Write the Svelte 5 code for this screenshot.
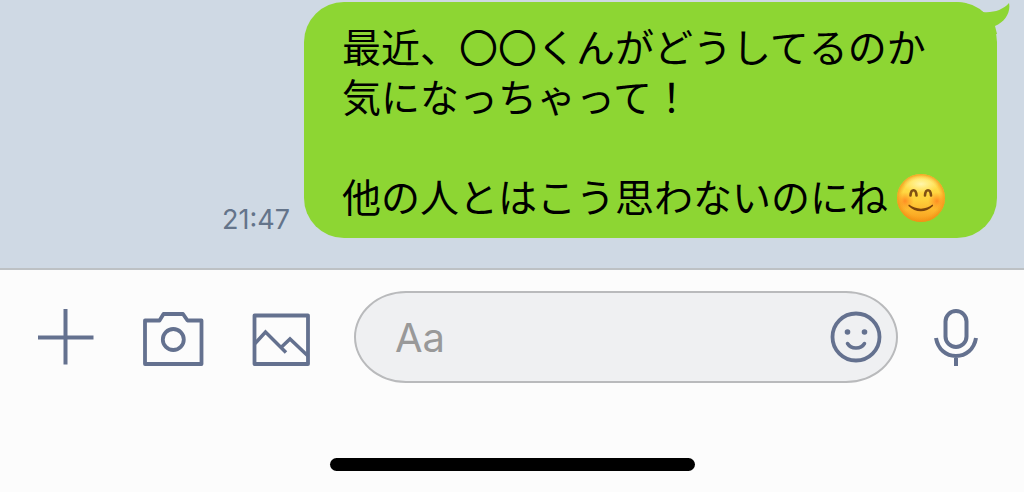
<script lang="ts">
	let draft = '';
	const message = '最近、〇〇くんがどうしてるのか\n気になっちゃって！\n\n他の人とはこう思わないのにね';
</script>

<div class="screen">
	<main class="chat">
		<time datetime="21:47">21:47</time>
		<div class="bubble">
			<svg class="tail" viewBox="0 0 56 34" aria-hidden="true">
				<path d="M0 2C13 2 21 7 29 12C39 13 49 10 55 3C57 12 51 22 41 26L43 34H0Z" />
			</svg>
			<p>{message}<svg class="emoji" viewBox="0 0 48 48" role="img" aria-label="😊">
					<defs>
						<linearGradient id="face" x1="0" y1="0" x2="0" y2="1">
							<stop offset="0" stop-color="#ffe955" />
							<stop offset="0.55" stop-color="#ffd03a" />
							<stop offset="1" stop-color="#f99a1c" />
						</linearGradient>
						<radialGradient id="shade">
							<stop offset="0.78" stop-color="#f39a18" stop-opacity="0" />
							<stop offset="1" stop-color="#ef8b12" stop-opacity="0.75" />
						</radialGradient>
						<radialGradient id="cheek">
							<stop offset="0" stop-color="#ff6a18" stop-opacity="0.65" />
							<stop offset="1" stop-color="#ff7a18" stop-opacity="0" />
						</radialGradient>
						<radialGradient id="shine">
							<stop offset="0" stop-color="#fff9b8" stop-opacity="0.9" />
							<stop offset="1" stop-color="#fff6a0" stop-opacity="0" />
						</radialGradient>
					</defs>
					<circle cx="24" cy="24" r="24" fill="url(#face)" />
					<circle cx="24" cy="24" r="24" fill="url(#shade)" />
					<ellipse cx="24" cy="10" rx="18" ry="9" fill="url(#shine)" />
					<circle cx="8" cy="27" r="9" fill="url(#cheek)" />
					<circle cx="40" cy="27" r="9" fill="url(#cheek)" />
					<g fill="none" stroke="#805013" stroke-linecap="round">
						<path stroke-width="2.6" d="M13.5 21.5C14 14.5 19 14.5 19.5 21.5M28 21.5C28.5 14.5 33.5 14.5 34 21.5" />
					</g>
					<path fill="#7b440b" d="M12 30.5C19 36 29 36 35.5 30.5Q36.5 31 36 32C29 39 18.500 39 11.500 32Q11 31 12 30.500Z" />
				</svg></p>
		</div>
	</main>

	<footer>
		<form class="composer" on:submit|preventDefault>
			<div class="tools">
				<button type="button" aria-label="追加">
					<svg width="56" height="56" viewBox="0 0 56 56">
						<path stroke-width="4" d="M0 28.500H55.500M27.500 0V55.500" />
					</svg>
				</button>
				<button type="button" aria-label="カメラ">
					<svg width="62" height="58" viewBox="0 0 62 58">
						<path stroke-width="3.800" stroke-linejoin="round" d="M3 12.500H17.500L21.500 6H41L45.500 12.500H59.500V56H3Z" />
						<circle cx="31.300" cy="31.500" r="10.500" stroke-width="3.800" />
					</svg>
				</button>
				<button type="button" aria-label="写真">
					<svg width="58" height="58" viewBox="0 0 58 58">
						<path stroke-width="3.800" stroke-linejoin="round" d="M2.500 7.500H56V56H2.500Z" />
						<path stroke-width="3.500" d="M3 35.500L13.500 24L34 44.500M28.500 40L38 31L56 48" />
					</svg>
				</button>
			</div>
			<div class="field">
				<input type="text" placeholder="Aa" aria-label="メッセージ" bind:value={draft} />
				<button type="button" aria-label="スタンプ">
					<svg width="52" height="52" viewBox="0 0 52 52">
						<circle cx="26" cy="26" r="23.500" stroke-width="3.800" />
						<circle class="dot" cx="17.500" cy="21" r="2.800" />
						<circle class="dot" cx="34.500" cy="21" r="2.800" />
						<path stroke-width="3.500" stroke-linecap="round" d="M17.500 32.500C21 38.500 31 38.500 34.500 32.500" />
					</svg>
				</button>
			</div>
			<button type="button" aria-label="音声">
				<svg width="44" height="58" viewBox="0 0 44 58">
					<rect x="11.500" y="3" width="21" height="36" rx="10.500" stroke-width="4" />
					<path stroke-width="4" d="M2 30C4 41.500 12 48 22 48S40 41.500 42 30M22 48V58" />
				</svg>
			</button>
		</form>
		<div class="home-bar"></div>
	</footer>
</div>

<style>
	:global(body) {
		margin: 0;
		background: #fcfcfc;
	}

	.screen {
		color: #000;
		font-family: Inter, 'Noto Sans CJK JP', sans-serif;
	}

	.chat {
		display: flex;
		justify-content: flex-end;
		align-items: flex-end;
		gap: 14px;
		padding: 2px 27px 30px;
		background: #cfd9e4;
	}

	time {
		padding-bottom: 3px;
		color: #64748a;
		font-size: 27px;
		line-height: 30px;
	}

	.bubble {
		position: relative;
		padding: 18px 52px 18px 38px;
		border-radius: 40px;
		background: #8dd633;
	}

	.tail {
		position: absolute;
		top: -2px;
		right: -13px;
		width: 56px;
		height: 34px;
		fill: #8dd633;
	}

	p {
		margin: 0;
		font-family: 'Noto Sans CJK JP', sans-serif;
		font-size: 39px;
		line-height: 50px;
		white-space: pre;
	}

	.emoji {
		width: 48px;
		height: 48px;
		margin: 0 0 -2px 9px;
		vertical-align: -8px;
	}

	footer {
		border-top: 2px solid #bdc1c4;
		background: #fcfcfc;
	}

	.composer {
		display: flex;
		align-items: center;
		padding: 21px 46px 0 38px;
	}

	.tools {
		display: flex;
		align-items: center;
		gap: 48px;
	}

	button {
		display: block;
		flex: none;
		padding: 0;
		border: none;
		background: none;
		cursor: pointer;
	}

	button svg {
		display: block;
		fill: none;
		stroke: #64718f;
	}

	.dot {
		fill: #64718f;
		stroke: none;
	}

	.field {
		display: flex;
		flex: 1;
		align-items: center;
		box-sizing: border-box;
		height: 92px;
		min-width: 0;
		margin: 0 36px 0 44px;
		padding: 0 14px 0 39px;
		border: 2px solid #b9babc;
		border-radius: 52px / 46px;
		background: #eff0f2;
	}

	input {
		flex: 1;
		min-width: 0;
		padding: 0;
		border: none;
		outline: none;
		background: none;
		color: #000;
		font: 40px Inter, 'Noto Sans CJK JP', sans-serif;
	}

	input::placeholder {
		color: #999;
		opacity: 1;
	}

	.home-bar {
		width: 365px;
		max-width: 60%;
		height: 13px;
		margin: 75px auto 21px;
		border-radius: 7px;
		background: #000;
	}
</style>
